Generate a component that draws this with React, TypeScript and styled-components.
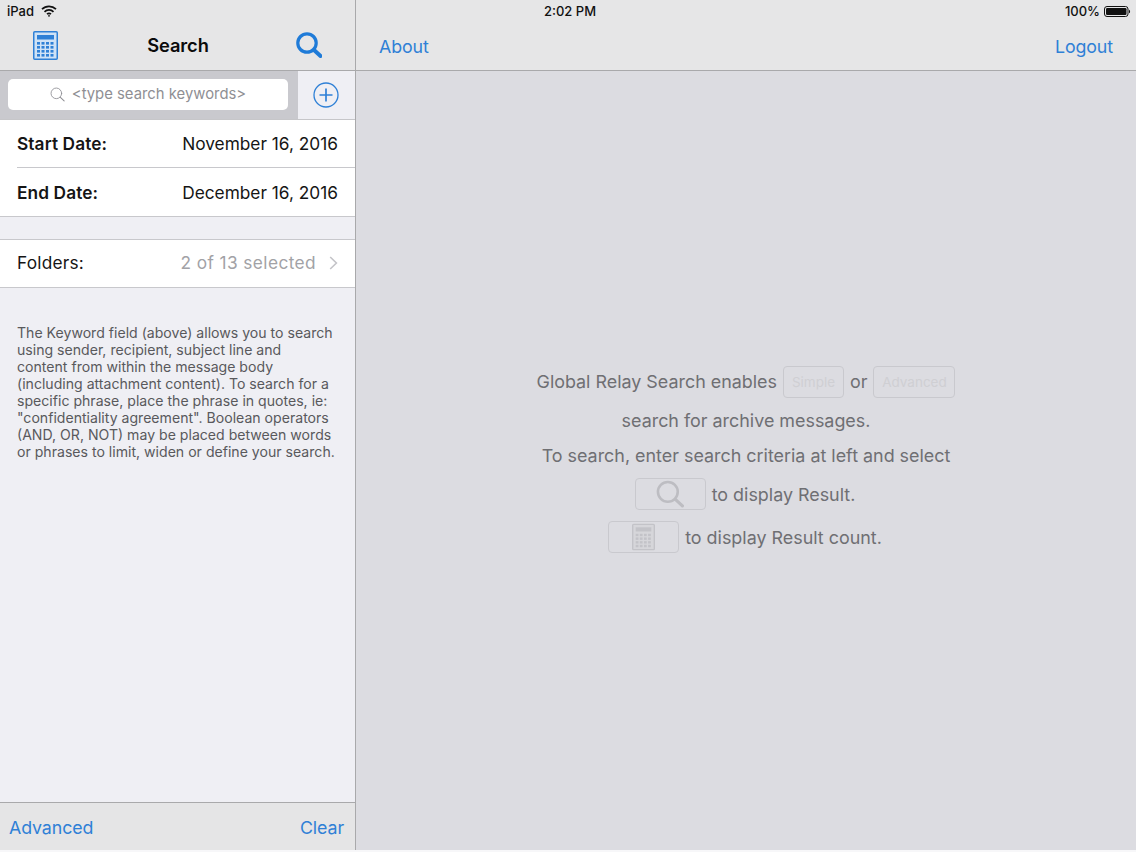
import React from "react";
import styled, { createGlobalStyle } from "styled-components";

const Global = createGlobalStyle`
  html, body { margin: 0; padding: 0; background: #f7f7f9; }
  body { font-family: Inter, "Liberation Sans", sans-serif; -webkit-font-smoothing: antialiased; }
  * { box-sizing: border-box; }
`;

const Page = styled.div`
  width: 1136px;
  height: 850px;
  display: flex;
  overflow: hidden;
`;

const Sidebar = styled.aside`
  width: 356px;
  flex: none;
  display: flex;
  flex-direction: column;
  background: #efeff4;
  border-right: 1px solid #a9a9ab;
`;

const Main = styled.main`
  flex: 1;
  display: flex;
  flex-direction: column;
  background: #dcdce1;
`;

const Bar = styled.header`
  height: 71px;
  flex: none;
  background: #e6e6e7;
  border-bottom: 1px solid #a9a9ab;
  display: flex;
  flex-direction: column;
`;

const Status = styled.div`
  height: 22px;
  flex: none;
  padding: 0 7px;
  display: flex;
  align-items: center;
  justify-content: space-between;
  font-size: 13px;
  font-weight: 500;
  color: #111;
`;

const StatusGroup = styled.span`
  display: flex;
  align-items: center;
  gap: 7px;
`;

const MainStatus = styled(Status)`
  display: grid;
  grid-template-columns: 188px auto 1fr;
  padding: 0 5px 0 0;
`;

const StatusEnd = styled(StatusGroup)`
  justify-self: end;
  gap: 4px;
`;

const NavRow = styled.div`
  flex: 1;
  display: flex;
  align-items: center;
  justify-content: space-between;
  padding: 0 23px 0 23px;
`;

const SideNav = styled(NavRow)`
  padding: 0 33px 2px 33px;
`;

const Title = styled.h1`
  margin: 0 0 0 2px;
  font-size: 18.3px;
  font-weight: 600;
  color: #0b0b0b;
  letter-spacing: -0.1px;
`;

const LinkText = styled.a`
  font-size: 17.8px;
  color: #2f80d6;
  letter-spacing: -0.1px;
`;

const SearchRow = styled.div`
  height: 49px;
  flex: none;
  display: flex;
  background: #c9c9ce;
  border-bottom: 1px solid #c6c6c9;
`;

const SearchField = styled.div`
  flex: 1;
  margin: 8px 10px 9px 8px;
  padding: 0 0 1px 0;
  border-radius: 5px;
  background: #fff;
  display: flex;
  align-items: center;
  justify-content: center;
  gap: 7px;
  color: #8f8f94;
  font-size: 14.85px;
`;

const AddCell = styled.div`
  width: 57px;
  flex: none;
  padding-right: 2px;
  background: #efeff4;
  display: flex;
  align-items: center;
  justify-content: center;
`;

const Group = styled.section`
  background: #fff;
  border-bottom: 1px solid #c8c8cc;
`;

const FolderGroup = styled(Group)`
  margin-top: 22px;
  border-top: 1px solid #c8c8cc;
`;

const Row = styled.div`
  height: 48px;
  margin-left: 17px;
  padding: 0 17px 0 0;
  display: flex;
  align-items: center;
  justify-content: space-between;
  font-size: 17.3px;
  color: #151515;
`;

const StartRow = styled(Row)`
  border-bottom: 1px solid #c8c8cc;
`;

const EndRow = styled(Row)`
  padding-top: 1px;
`;

const FolderRow = styled(Row)`
  height: 47px;
  padding-bottom: 2px;
`;

const BoldLabel = styled.span`
  font-weight: 600;
  letter-spacing: 0.1px;
`;

const PlainLabel = styled.span`
  letter-spacing: 0.2px;
`;

const RowValue = styled.span`
  display: flex;
  align-items: center;
  gap: 13px;
  color: #a2a2a6;
  letter-spacing: 0.4px;
`;

const Help = styled.p`
  margin: 36px 0 0;
  padding: 0 16px 0 17px;
  font-size: 14.1px;
  line-height: 17px;
  color: #59595c;
  flex: 1;
  white-space: nowrap;
`;

const Footer = styled.footer`
  height: 48px;
  flex: none;
  background: #e5e5e6;
  border-top: 1px solid #a9a9ab;
  display: flex;
  align-items: center;
  justify-content: space-between;
  padding: 1px 11px 0 9px;
`;

const Content = styled.div`
  flex: 1;
  display: flex;
  flex-direction: column;
  align-items: center;
  padding-top: 292px;
  padding-right: 2px;
  color: #6f6f73;
  font-size: 17.9px;
`;

const Line = styled.div<{ $h: number }>`
  height: ${(p) => p.$h}px;
  display: flex;
  align-items: center;
  gap: 6px;
  white-space: nowrap;
`;

const TextLine = styled(Line)`
  padding-left: 2px;
`;

const Ghost = styled.span<{ $w: number }>`
  width: ${(p) => p.$w}px;
  height: 32px;
  border: 1px solid #c9c9ce;
  border-radius: 4px;
  display: inline-flex;
  align-items: center;
  justify-content: center;
  color: #cfcfd3;
  font-size: 13.5px;
`;

const CalcFrame = styled.svg`
  flex: none;
`;

const Calculator = ({ w, h, color, fill }: { w: number; h: number; color: string; fill: string }) => (
  <CalcFrame width={w} height={h} viewBox="0 0 25 29">
    <rect x="0.75" y="0.75" width="23.5" height="27.5" rx="1" fill={fill} stroke={color} strokeWidth="1.5" />
    <rect x="4" y="4" width="17" height="4.5" fill={color} />
    {[11, 15, 19, 23].map((y) =>
      [4, 8.5, 13, 17.5].map((x) => (
        <rect key={`${x}-${y}`} x={x} y={y} width="3" height="2.6" fill={color} />
      ))
    )}
  </CalcFrame>
);

const Magnifier = ({ size, color, width = 2 }: { size: number; color: string; width?: number }) => (
  <svg width={size} height={size} viewBox="0 0 26 26" fill="none" stroke={color} strokeLinecap="round">
    <circle cx="11" cy="11" r="9.2" strokeWidth={width} />
    <path d="M18 18 L24.5 24" strokeWidth={width * 1.25} />
  </svg>
);

const Wifi = () => (
  <svg width="16" height="12" viewBox="0 0 16 12" fill="none" stroke="#111" strokeWidth="1.7">
    <path d="M1 4.2 A10 10 0 0 1 15 4.2" />
    <path d="M3.5 6.8 A6.4 6.4 0 0 1 12.5 6.8" />
    <path d="M6 9.2 A3 3 0 0 1 10 9.2" />
    <circle cx="8" cy="10.8" r="0.9" fill="#111" stroke="none" />
  </svg>
);

const Battery = () => (
  <svg width="27" height="11" viewBox="0 0 27 11">
    <rect x="0.5" y="0.5" width="23.5" height="10" rx="2.5" fill="none" stroke="#111" />
    <rect x="2" y="2" width="20.5" height="7" rx="1.2" fill="#111" />
    <path d="M25 3.7 C26.4 4 26.4 7 25 7.3 Z" fill="#111" />
  </svg>
);

const Plus = () => (
  <svg width="26" height="26" viewBox="0 0 26 26" fill="none" stroke="#2f80d6">
    <circle cx="13" cy="13" r="12" strokeWidth="1.3" />
    <path d="M13 6.5 V19.5 M6.5 13 H19.5" strokeWidth="1.7" />
  </svg>
);

const Chevron = () => (
  <svg width="9" height="14" viewBox="0 0 9 14" fill="none" stroke="#c4c4c8" strokeWidth="1.6">
    <path d="M1.2 1 L7.4 7 L1.2 13" />
  </svg>
);

export default function App() {
  return (
    <Page>
      <Global />
      <Sidebar>
        <Bar>
          <Status>
            <StatusGroup>
              iPad <Wifi />
            </StatusGroup>
          </Status>
          <SideNav>
            <Calculator w={25} h={29} color="#2f80d6" fill="#cfe2f6" />
            <Title>Search</Title>
            <Magnifier size={26} color="#1f7bd8" width={3.2} />
          </SideNav>
        </Bar>
        <SearchRow>
          <SearchField>
            <Magnifier size={15} color="#8f8f94" width={1.5} />
            &lt;type search keywords&gt;
          </SearchField>
          <AddCell>
            <Plus />
          </AddCell>
        </SearchRow>
        <Group>
          <StartRow>
            <BoldLabel>Start Date:</BoldLabel>
            <span>November 16, 2016</span>
          </StartRow>
          <EndRow>
            <BoldLabel>End Date:</BoldLabel>
            <span>December 16, 2016</span>
          </EndRow>
        </Group>
        <FolderGroup>
          <FolderRow>
            <PlainLabel>Folders:</PlainLabel>
            <RowValue>
              2 of 13 selected <Chevron />
            </RowValue>
          </FolderRow>
        </FolderGroup>
        <Help>
          The Keyword field (above) allows you to search
          <br />
          using sender, recipient, subject line and
          <br />
          content from within the message body
          <br />
          (including attachment content). To search for a
          <br />
          specific phrase, place the phrase in quotes, ie:
          <br />
          "confidentiality agreement". Boolean operators
          <br />
          (AND, OR, NOT) may be placed between words
          <br />
          or phrases to limit, widen or define your search.
        </Help>
        <Footer>
          <LinkText>Advanced</LinkText>
          <LinkText>Clear</LinkText>
        </Footer>
      </Sidebar>
      <Main>
        <Bar>
          <MainStatus>
            <span />
            <span>2:02 PM</span>
            <StatusEnd>
              100% <Battery />
            </StatusEnd>
          </MainStatus>
          <NavRow>
            <LinkText>About</LinkText>
            <LinkText>Logout</LinkText>
          </NavRow>
        </Bar>
        <Content>
          <TextLine $h={37}>
            Global Relay Search enables <Ghost $w={61}>Simple</Ghost> or <Ghost $w={82}>Advanced</Ghost>
          </TextLine>
          <TextLine $h={40}>search for archive messages.</TextLine>
          <TextLine $h={30}>To search, enter search criteria at left and select</TextLine>
          <Line $h={48}>
            <Ghost $w={71}>
              <Magnifier size={28} color="#bdbdc2" width={2.4} />
            </Ghost>
            to display Result.
          </Line>
          <Line $h={38}>
            <Ghost $w={71}>
              <Calculator w={23} h={30} color="#c3c3c8" fill="#d6d6da" />
            </Ghost>
            to display Result count.
          </Line>
        </Content>
      </Main>
    </Page>
  );
}
